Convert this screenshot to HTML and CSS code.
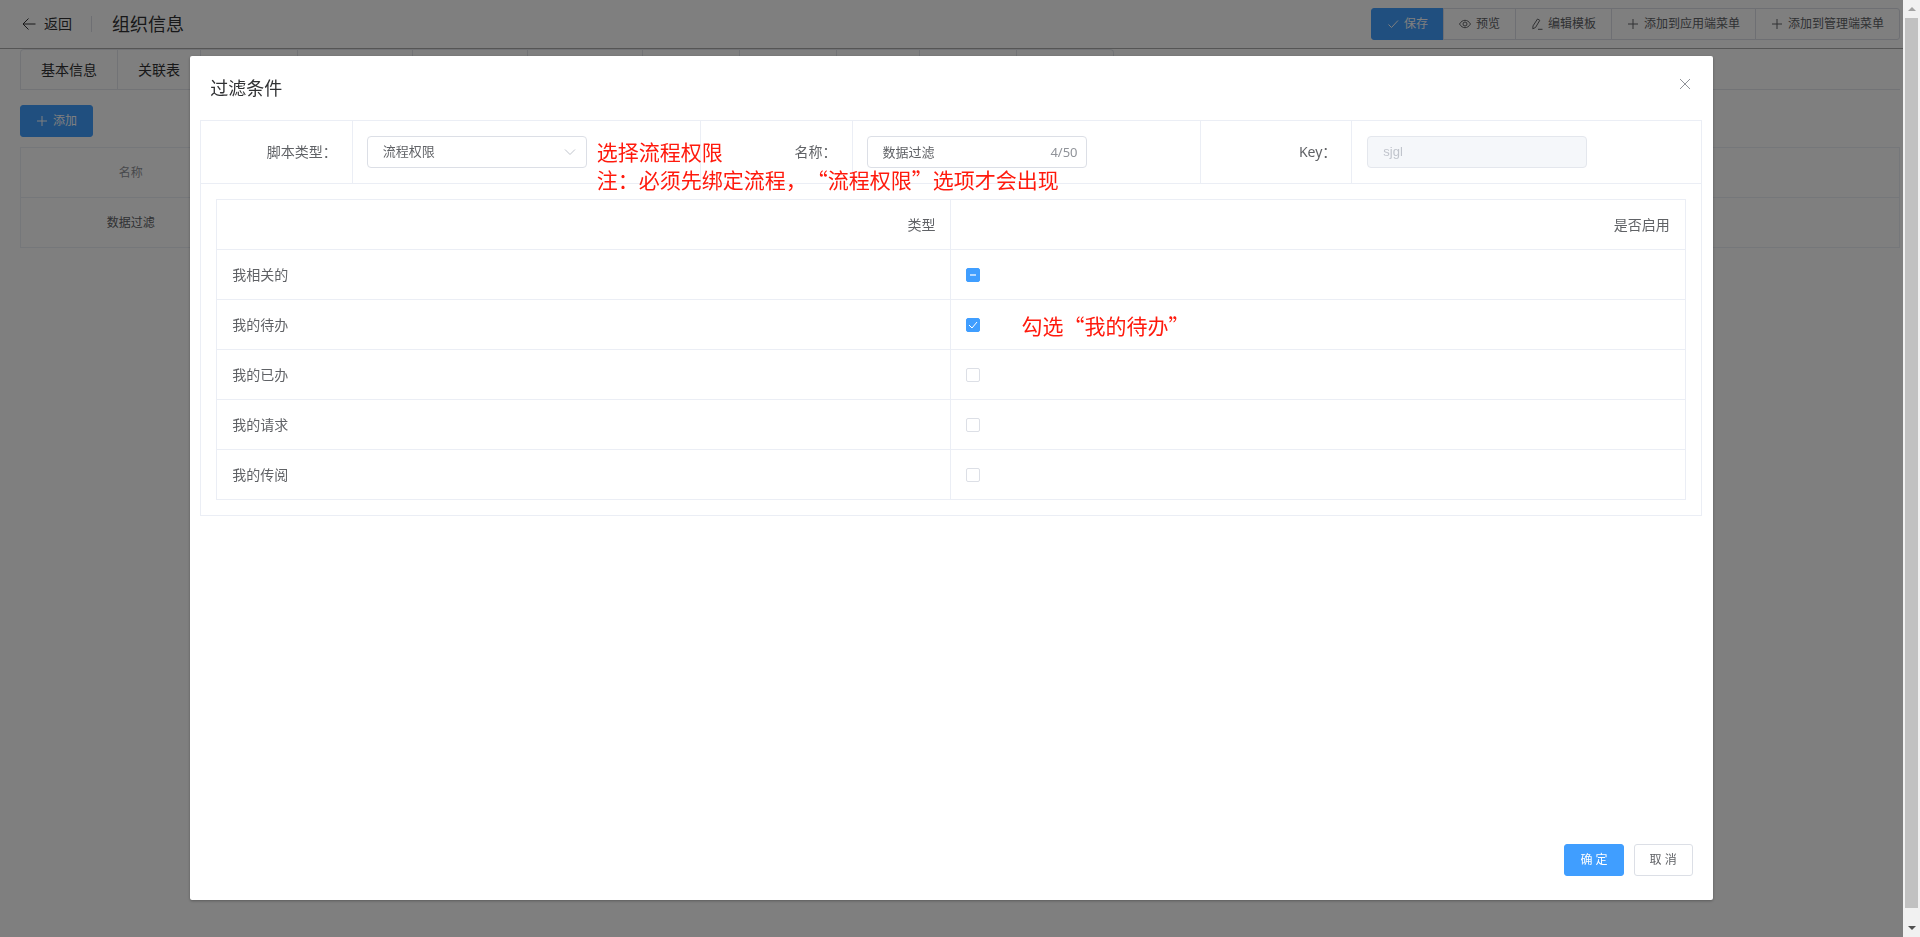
FILE: index.html
```
<!DOCTYPE html>
<html lang="zh-CN">
<head>
    <meta charset="UTF-8">
    <meta name="viewport" content="width=device-width, initial-scale=1.0">
    <title>组织信息</title>
    <link rel="stylesheet" href="styles.css">
</head>
<body>
    <div class="page">
        <header class="topbar">
            <a class="back" href="#">
                <svg class="back-icon" viewBox="0 0 14 14"><path d="M13.5 7H1M6.500 1.500L1 7l5.500 5.500"/></svg>
                返回
            </a>
            <h1>组织信息</h1>
            <div class="btn-group">
                <button class="btn primary" type="button">
                    <svg class="icon" viewBox="0 0 12 12"><path d="M1.500 6.500l3 3L11 2.500"/></svg>
                    保存
                </button>
                <button class="btn" type="button">
                    <svg class="icon" viewBox="0 0 12 12"><path d="M.5 6C2 3.500 4 2.300 6 2.300S10 3.500 11.500 6C10 8.500 8 9.700 6 9.700S2 8.500.5 6z"/><circle cx="6" cy="6" r="2"/></svg>
                    预览
                </button>
                <button class="btn" type="button">
                    <svg class="icon" viewBox="0 0 12 12"><path d="M6.500 1l2.300 1.300-4.300 7.200-2.700 1.300.2-2.900zM7 11.300h4.500"/></svg>
                    编辑模板
                </button>
                <button class="btn" type="button">
                    <svg class="icon" viewBox="0 0 12 12"><path d="M6 1v10M1 6h10"/></svg>
                    添加到应用端菜单
                </button>
                <button class="btn" type="button">
                    <svg class="icon" viewBox="0 0 12 12"><path d="M6 1v10M1 6h10"/></svg>
                    添加到管理端菜单
                </button>
            </div>
        </header>
        <main>
            <nav class="tabs">
                <a class="tab" href="#">基本信息</a>
                <a class="tab" href="#">关联表</a>
                <span class="tab w4"></span>
                <span class="tab w5"></span>
                <span class="tab w5"></span>
                <span class="tab w5"></span>
                <span class="tab w4"></span>
                <span class="tab w4"></span>
                <span class="tab w3"></span>
                <span class="tab w4"></span>
                <span class="tab w4"></span>
            </nav>
            <button class="btn primary add" type="button">
                <svg class="icon" viewBox="0 0 12 12"><path d="M6 1v10M1 6h10"/></svg>
                添加
            </button>
            <table class="list">
                <thead>
                    <tr><th>名称</th><th></th></tr>
                </thead>
                <tbody>
                    <tr><td>数据过滤</td><td></td></tr>
                </tbody>
            </table>
        </main>
    </div>

    <div class="mask">
        <div class="dialog" role="dialog" aria-labelledby="dialogTitle">
            <div class="dialog-head">
                <h2 id="dialogTitle">过滤条件</h2>
                <button class="close" type="button" aria-label="关闭">
                    <svg viewBox="0 0 12 12"><path d="M1 1l10 10M11 1L1 11"/></svg>
                </button>
            </div>
            <div class="panel">
                <div class="form-row">
                    <label class="form-label" for="scriptType">脚本类型：</label>
                    <div class="form-cell">
                        <div class="field">
                            <select id="scriptType">
                                <option>流程权限</option>
                            </select>
                            <svg class="arrow" viewBox="0 0 12 12"><path d="M1 3.500l5 5 5-5"/></svg>
                        </div>
                        <p class="note note-type">选择流程权限<br>注：必须先绑定流程，“流程权限”选项才会出现</p>
                    </div>
                    <label class="form-label" for="name">名称：</label>
                    <div class="form-cell">
                        <div class="field">
                            <input id="name" type="text" value="数据过滤" maxlength="50">
                            <span class="count">4/50</span>
                        </div>
                    </div>
                    <label class="form-label" for="key">Key：</label>
                    <div class="form-cell">
                        <div class="field">
                            <input id="key" type="text" value="sjgl" disabled>
                        </div>
                    </div>
                </div>
                <div class="panel-body">
                    <table class="rights">
                        <thead>
                            <tr><th>类型</th><th>是否启用</th></tr>
                        </thead>
                        <tbody>
                            <tr>
                                <td><label for="related">我相关的</label></td>
                                <td><input class="partial" id="related" type="checkbox"></td>
                            </tr>
                            <tr>
                                <td><label for="todo">我的待办</label></td>
                                <td>
                                    <div class="check-line">
                                        <input id="todo" type="checkbox" checked>
                                        <span class="note">勾选“我的待办”</span>
                                    </div>
                                </td>
                            </tr>
                            <tr>
                                <td><label for="done">我的已办</label></td>
                                <td><input id="done" type="checkbox"></td>
                            </tr>
                            <tr>
                                <td><label for="request">我的请求</label></td>
                                <td><input id="request" type="checkbox"></td>
                            </tr>
                            <tr>
                                <td><label for="read">我的传阅</label></td>
                                <td><input id="read" type="checkbox"></td>
                            </tr>
                        </tbody>
                    </table>
                </div>
            </div>
            <div class="dialog-foot">
                <button class="btn primary" type="button">确 定</button>
                <button class="btn" type="button">取 消</button>
            </div>
        </div>
    </div>

    <div class="scrollbar">
        <svg viewBox="0 0 8 4"><path d="M0 4l4-4 4 4z" fill="#a3a3a3"/></svg>
        <div class="thumb"></div>
        <svg viewBox="0 0 8 4"><path d="M0 0l4 4 4-4z" fill="#505050"/></svg>
    </div>
</body>
</html>
```
FILE: styles.css
```
* {
    box-sizing: border-box;
    margin: 0;
    padding: 0;
}

body {
    font-family: "Noto Sans", "Noto Sans CJK SC", sans-serif;
    font-size: 14px;
    line-height: 20px;
    color: #606266;
    background-color: #fff;
    overflow: hidden;
}

button,
input,
select {
    font: inherit;
    color: inherit;
}

svg {
    fill: none;
    stroke: currentColor;
}

.page {
    height: 100vh;
    padding-right: 17px;
}

.topbar {
    display: flex;
    align-items: center;
    height: 49px;
    padding: 0 3px 0 22px;
    border-bottom: 1px solid #aaa;
}

.back {
    display: flex;
    align-items: center;
    gap: 8px;
    padding-right: 19px;
    border-right: 1px solid #dcdfe6;
    color: #303133;
    line-height: 16px;
    text-decoration: none;
}

.back-icon {
    width: 14px;
    height: 14px;
}

h1,
h2 {
    font-size: 18px;
    font-weight: 400;
    line-height: 24px;
    color: #303133;
}

h1 {
    margin-left: 20px;
}

.btn {
    display: inline-flex;
    align-items: center;
    justify-content: center;
    gap: 5px;
    height: 32px;
    padding: 0 15px;
    border: 1px solid #dcdfe6;
    border-radius: 3px;
    background-color: #fff;
    font-size: 12px;
    white-space: nowrap;
}

.btn.primary {
    border-color: #409eff;
    background-color: #409eff;
    color: #fff;
}

.icon {
    width: 12px;
    height: 12px;
}

.btn-group {
    display: flex;
    margin-left: auto;
}

.btn-group .btn {
    border-radius: 0;
    margin-left: -1px;
}

.btn-group .btn:first-child {
    border-radius: 3px 0 0 3px;
}

.btn-group .btn:last-child {
    border-radius: 0 3px 3px 0;
}

main {
    padding: 0 3px 0 20px;
}

.tabs {
    display: flex;
    height: 41px;
    border-bottom: 1px solid #e4e7ed;
}

.tab {
    padding: 0 20px;
    border-top: 1px solid #e4e7ed;
    border-right: 1px solid #e4e7ed;
    color: #303133;
    line-height: 40px;
    text-decoration: none;
}

.tab:first-child {
    border-left: 1px solid #e4e7ed;
    border-radius: 4px 0 0 0;
}

.tab:last-child {
    border-radius: 0 4px 0 0;
}

.tab.w3 {
    width: 83px;
}

.tab.w4 {
    width: 97px;
}

.tab.w5 {
    width: 115px;
}

.add {
    margin: 15px 0 10px;
}

table {
    width: 100%;
    border-collapse: collapse;
    table-layout: fixed;
}

th,
td {
    height: 50px;
    border: 1px solid #ebeef5;
    font-weight: 400;
}

.list {
    font-size: 12px;
    text-align: center;
}

.list th,
.list td {
    border-right-width: 0;
    border-left-width: 0;
}

.list th:first-child,
.list td:first-child {
    width: 220px;
    border-left-width: 1px;
}

.list th:last-child,
.list td:last-child {
    border-right-width: 1px;
}

.list th {
    color: #909399;
}

.mask {
    position: fixed;
    inset: 0 17px 0 0;
    padding: 56px 0 37px;
    background-color: rgba(0, 0, 0, 0.5);
}

.dialog {
    display: flex;
    flex-direction: column;
    width: 80%;
    height: 100%;
    margin: 0 auto;
    padding: 0 11px 0 10px;
    border-radius: 2px;
    background-color: #fff;
    box-shadow: 0 1px 3px rgba(0, 0, 0, 0.3);
}

.dialog-head {
    display: flex;
    align-items: flex-start;
    justify-content: space-between;
    padding: 20px 9px 20px 10px;
}

.close {
    display: flex;
    padding: 2px;
    border: 0;
    background: none;
    color: #909399;
}

.close svg {
    width: 12px;
    height: 12px;
}

.panel {
    border: 1px solid #ebeef5;
}

.form-row {
    display: grid;
    grid-template-columns: 10fr 23fr 10fr 23fr 10fr 23fr;
    border-bottom: 1px solid #ebeef5;
}

.form-label {
    padding: 21px 15px;
    border-right: 1px solid #ebeef5;
    text-align: right;
}

.form-cell {
    position: relative;
    padding: 15px 14px;
    border-right: 1px solid #ebeef5;
}

.form-cell:last-child {
    padding-left: 15px;
    border-right: 0;
}

.field {
    position: relative;
    width: 220px;
}

.field input,
.field select {
    display: block;
    width: 100%;
    height: 32px;
    padding: 0 15px 2px;
    border: 1px solid #dcdfe6;
    border-radius: 4px;
    background-color: #fff;
    font-size: 13px;
    appearance: none;
}

.field input:disabled {
    border-color: #e4e7ed;
    background-color: #f5f7fa;
    color: #c0c4cc;
    font-family: "Liberation Sans", sans-serif;
}

.arrow {
    position: absolute;
    top: 10px;
    right: 11px;
    width: 12px;
    height: 12px;
    color: #c0c4cc;
}

.count {
    position: absolute;
    top: 6px;
    right: 9px;
    color: #909399;
    font-size: 13px;
}

.note {
    color: #ff1a0d;
    font-family: "Noto Sans CJK SC", sans-serif;
    font-size: 21px;
    line-height: 28px;
    text-spacing-trim: space-all;
    white-space: nowrap;
}

.note-type {
    position: absolute;
    top: 16px;
    left: 244px;
    z-index: 1;
}

.panel-body {
    padding: 15px;
}

.rights th,
.rights td {
    padding: 0 15px;
    text-align: left;
}

.rights th {
    text-align: right;
}

.rights input {
    display: block;
    width: 14px;
    height: 14px;
    border: 1px solid #dcdfe6;
    border-radius: 2px;
    background-color: #fff;
    appearance: none;
}

.rights input:checked,
.rights .partial {
    border-color: #409eff;
    background: #409eff center / 12px 12px no-repeat;
}

.rights input:checked {
    background-image: url("data:image/svg+xml,%3Csvg xmlns='http://www.w3.org/2000/svg' viewBox='0 0 12 12'%3E%3Cpath d='M2 6l3 3 5-6' fill='none' stroke='%23fff'/%3E%3C/svg%3E");
}

.rights .partial {
    background-image: url("data:image/svg+xml,%3Csvg xmlns='http://www.w3.org/2000/svg' viewBox='0 0 12 12'%3E%3Cpath d='M3 5h6v2H3z' fill='%23b3d8ff'/%3E%3C/svg%3E");
}

.check-line {
    display: flex;
    align-items: center;
    gap: 41px;
}

.dialog-foot {
    display: flex;
    justify-content: flex-end;
    gap: 10px;
    margin-top: auto;
    padding: 0 9px 24px;
}

.scrollbar {
    position: fixed;
    inset: 0 0 0 auto;
    display: flex;
    flex-direction: column;
    align-items: center;
    gap: 7px;
    width: 17px;
    padding: 7px 2px;
    background-color: #f1f1f1;
}

.scrollbar svg {
    width: 8px;
    height: 4px;
    stroke: none;
}

.thumb {
    width: 13px;
    flex: 1;
    margin-bottom: 11px;
    background-color: #c1c1c1;
}
```
